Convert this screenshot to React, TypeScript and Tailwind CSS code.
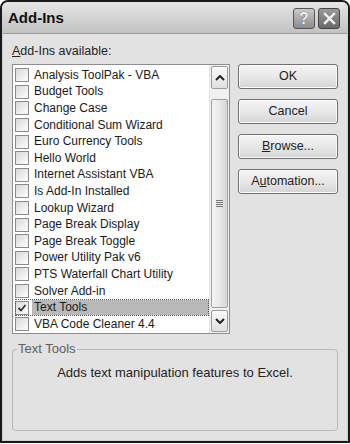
import React from "react";

const items = [
  "Analysis ToolPak - VBA",
  "Budget Tools",
  "Change Case",
  "Conditional Sum Wizard",
  "Euro Currency Tools",
  "Hello World",
  "Internet Assistant VBA",
  "Is Add-In Installed",
  "Lookup Wizard",
  "Page Break Display",
  "Page Break Toggle",
  "Power Utility Pak v6",
  "PTS Waterfall Chart Utility",
  "Solver Add-in",
  "Text Tools",
  "VBA Code Cleaner 4.4",
];

const font = { fontFamily: "'Liberation Sans', Arial, sans-serif" };

function Check({ checked }: { checked: boolean }) {
  return (
    <div className="w-[14px] h-[14px] shrink-0 border border-[#8a8a8a] bg-gradient-to-br from-[#d8d8d8] to-white flex items-center justify-center">
      {checked && (
        <svg width="10" height="10" viewBox="0 0 10 10">
          <path d="M1.5 5 L4 7.5 L8.5 2" stroke="#333" strokeWidth="1.8" fill="none" />
        </svg>
      )}
    </div>
  );
}

function Btn({ children }: { children: React.ReactNode }) {
  return (
    <button className="w-[100px] h-[25px] rounded-[3px] border border-[#707070] bg-gradient-to-b from-[#f4f4f4] via-[#e8e8e8] to-[#d4d4d4] text-[12.5px] text-[#222] shadow-[inset_0_0_0_1px_#fbfbfb]">
      {children}
    </button>
  );
}

export default function App() {
  return (
    <div className="w-[350px] h-[444px] bg-white" style={font}>
      <div className="w-full h-[443px] flex flex-col rounded-t-[8px] border-2 border-[#1a1a1a] bg-[#cfcfcf] overflow-hidden">
        {/* title bar */}
        <div className="h-[31px] shrink-0 flex items-center justify-between pl-[6px] pr-[8px] bg-gradient-to-b from-[#e6e6e6] to-[#c2c2c2]">
          <span className="text-[15px] font-bold text-[#111] mt-[1px]">Add-Ins</span>
          <div className="flex gap-[3px] mt-[2px]">
            <div className="w-[22px] h-[21px] rounded-[3px] border border-[#555] bg-gradient-to-b from-[#cacaca] to-[#8c8c8c] flex items-center justify-center text-[16px] font-bold">
              <span className="text-[#f4f4f4] [text-shadow:0_0_1px_#333]">?</span>
            </div>
            <div className="w-[22px] h-[21px] rounded-[3px] border border-[#444] bg-gradient-to-b from-[#9a9a9a] to-[#6a6a6a] flex items-center justify-center">
              <svg width="13" height="13" viewBox="0 0 13 13">
                <path d="M2 2 L11 11 M11 2 L2 11" stroke="#f2f2f2" strokeWidth="2.4" strokeLinecap="square" />
              </svg>
            </div>
          </div>
        </div>
        {/* body */}
        <div className="flex-1 flex flex-col bg-[#e2e2e2] border-t border-[#9a9a9a] mx-[1px] mb-[1px] px-[9px]">
          <div className="text-[12.5px] text-[#222] mt-[10px] mb-[5px] leading-[15px]">
            <span className="underline">A</span>dd-Ins available:
          </div>
          <div className="flex">
            <div className="w-[218px] h-[270px] border border-[#8e8e8e] bg-white flex">
              <div className="flex-1 flex flex-col pt-[2px] pl-[2px]">
                {items.map((it) => {
                  const sel = it === "Text Tools";
                  return (
                    <div
                      key={it}
                      className={`h-[16.6px] flex items-center gap-[3px] ${sel ? "outline outline-1 outline-dotted outline-[#555] -outline-offset-1" : ""}`}
                    >
                      <Check checked={sel} />
                      <span className={`text-[12px] leading-[15px] text-[#1a1a1a] whitespace-nowrap flex-1 pl-[2px] ${sel ? "bg-[#b9b9b9]" : ""}`}>
                        {it}
                      </span>
                    </div>
                  );
                })}
              </div>
              {/* scrollbar */}
              <div className="w-[20px] shrink-0 flex flex-col bg-[#f0f0f0] border-l border-[#e6e6e6] p-[1px]">
                <div className="h-[23px] border border-[#9c9c9c] rounded-[2px] bg-gradient-to-b from-[#fafafa] to-[#e0e0e0] flex items-center justify-center">
                  <svg width="10" height="6" viewBox="0 0 10 6">
                    <path d="M1 5 L5 1 L9 5" stroke="#222" strokeWidth="2" fill="none" />
                  </svg>
                </div>
                <div className="h-[10px]" />
                <div className="flex-1 border border-[#a0a0a0] rounded-[2px] bg-gradient-to-r from-[#f4f4f4] via-[#e8e8e8] to-[#d6d6d6] flex items-start justify-center pt-[100px]">
                  <div className="flex flex-col gap-[1px]">
                    <div className="w-[7px] h-[1px] bg-[#777]" />
                    <div className="w-[7px] h-[1px] bg-[#777]" />
                    <div className="w-[7px] h-[1px] bg-[#777]" />
                    <div className="w-[7px] h-[1px] bg-[#777]" />
                  </div>
                </div>
                <div className="h-[2px]" />
                <div className="h-[22px] border border-[#9c9c9c] rounded-[2px] bg-gradient-to-b from-[#fafafa] to-[#e0e0e0] flex items-center justify-center">
                  <svg width="10" height="6" viewBox="0 0 10 6">
                    <path d="M1 1 L5 5 L9 1" stroke="#222" strokeWidth="2" fill="none" />
                  </svg>
                </div>
              </div>
            </div>
            <div className="flex flex-col gap-[10px] ml-[8px]">
              <Btn>OK</Btn>
              <Btn>Cancel</Btn>
              <Btn>
                <span className="underline">B</span>rowse...
              </Btn>
              <Btn>
                A<span className="underline">u</span>tomation...
              </Btn>
            </div>
          </div>
          {/* group box */}
          <div className="relative mt-[15px] h-[82px] border border-[#b8b8b8] rounded-[4px]">
            <span className="absolute -top-[10px] left-[4px] px-[1px] bg-[#e2e2e2] text-[13px] leading-[18px] text-[#606060]">
              Text Tools
            </span>
            <div className="text-center text-[13px] text-[#222] mt-[13px]">
              Adds text manipulation features to Excel.
            </div>
          </div>
        </div>
      </div>
    </div>
  );
}
